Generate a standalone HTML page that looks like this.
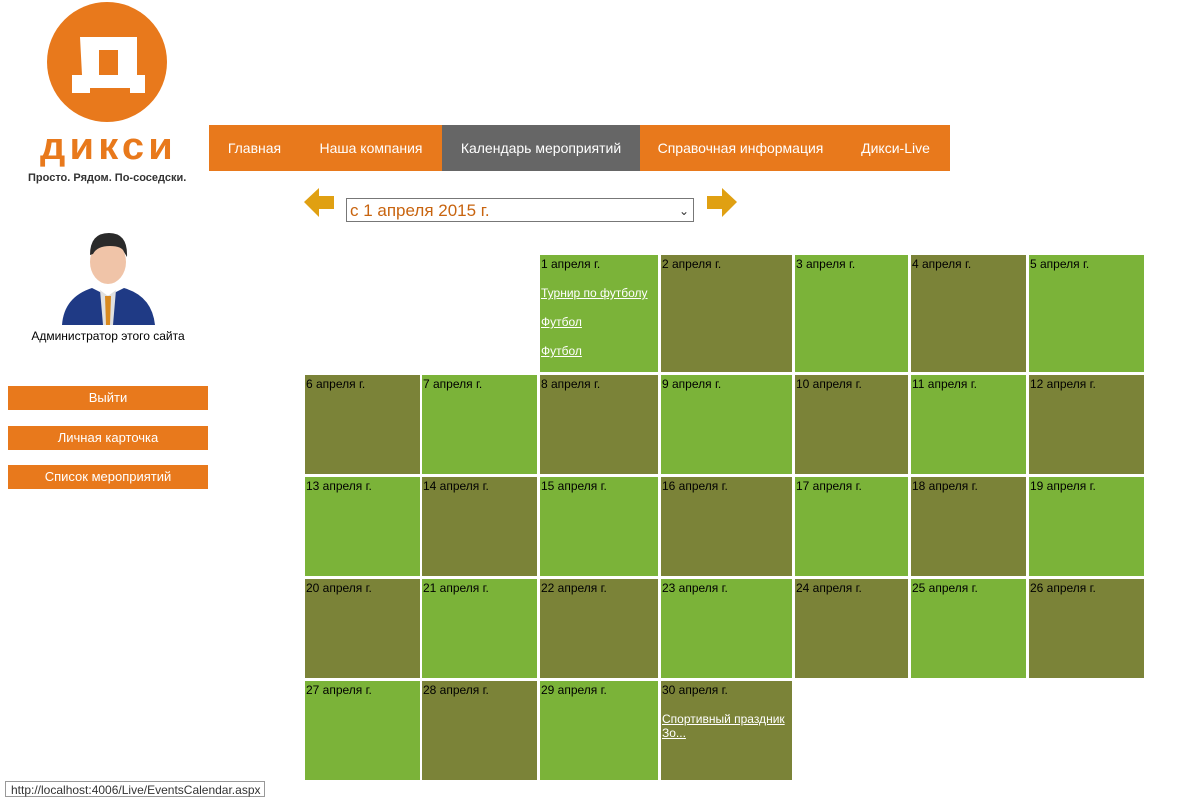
<!DOCTYPE html><html><head><meta charset="utf-8"><style>
body{margin:0;width:1189px;height:794px;position:relative;background:#fff;font-family:"Liberation Sans","DejaVu Sans",sans-serif;overflow:hidden}
.a{position:absolute}
.nav{left:209px;top:125px;height:46px;background:#e8791c;width:741px;display:flex}
.nav div{color:#fff;font-size:14px;line-height:46px;text-align:center}
.btn{position:absolute;left:8px;width:200px;height:24px;background:#e8791c;color:#fff;font-size:13px;line-height:24px;text-align:center}
.c{position:absolute;font-size:12px;color:#000;padding:2px 0 0 1px;box-sizing:border-box;line-height:14px}
.g{background:#7bb339}.o{background:#7b8338}
.c a{color:#fff;text-decoration:underline;display:block;margin-top:15px}
</style></head><body>
<svg class="a" style="left:40px;top:2px" width="135" height="125" viewBox="0 0 135 125">
<circle cx="67" cy="60" r="60" fill="#e8791c"/>
<path fill-rule="evenodd" d="M40 35H97V73H105V91H90V86H50V91H32V73H42Z M59 48H78V73H59Z" fill="#fff"/>
</svg>
<div class="a" style="left:40px;top:127px;font-size:38px;font-weight:900;color:#e8791c;letter-spacing:4px;line-height:40px;transform:scaleX(1.05);transform-origin:left">дикси</div>
<div class="a" style="left:28px;top:172px;font-size:11px;font-weight:bold;color:#333">Просто. Рядом. По-соседски.</div>
<div class="a nav"><div style="width:91px">Главная</div><div style="width:142px">Наша компания</div><div style="width:198px;background:#666">Календарь мероприятий</div><div style="width:201px">Справочная информация</div><div style="width:109px">Дикси-Live</div></div>
<svg class="a" style="left:302px;top:186px" width="34" height="32"><path d="M2 16L17 2v8h15v13H17v8z" fill="#e0a012"/></svg>
<svg class="a" style="left:705px;top:186px" width="34" height="32"><path d="M32 16L17 2v8H2v13h15v8z" fill="#e0a012"/></svg>
<div class="a" style="left:346px;top:198px;width:348px;height:24px;border:1px solid #777;box-sizing:border-box;font-size:17px;color:#c8640f;line-height:24px;padding-left:3px">с 1 апреля 2015 г.<span style="position:absolute;right:4px;top:0;color:#333;font-size:12px">&#8964;</span></div>
<svg class="a" style="left:60px;top:230px" width="96" height="95"><ellipse cx="48" cy="32" rx="18" ry="22" fill="#f0c4a8"/><path d="M30 25q0-22 19-22 19 0 18 24l-3-5q-2-6-14-6-13 0-17 8z" fill="#2a2a2a"/><path d="M2 95q2-28 30-37l16 8 16-8q28 8 31 37z" fill="#1f3a85"/><path d="M40 60l8 6 8-6 -3 35h-10z" fill="#e0e0e0"/><path d="M45 66h6l-1 29h-4z" fill="#d98a20"/></svg>
<div class="a" style="left:0;width:216px;top:329px;text-align:center;font-size:12px">Администратор этого сайта</div>
<div class="btn" style="top:386px">Выйти</div>
<div class="btn" style="top:426px">Личная карточка</div>
<div class="btn" style="top:465px">Список мероприятий</div>
<div id="cal"></div>
<script>
var xs=[[305,420],[422,537],[540,658],[661,792],[795,908],[911,1026],[1029,1144]];
var ys=[[255,372],[375,474],[477,576],[579,678],[681,780]];
var ev={1:['Турнир по футболу','Футбол','Футбол'],30:['Спортивный праздник Зо...']};
var h='';
for(var d=1;d<=30;d++){var i=d+1,r=Math.floor(i/7),c=i%7;var x=xs[c],y=ys[r];
var e='';(ev[d]||[]).forEach(function(t){e+='<a>'+t+'</a>'});
h+='<div class="c '+(d%2?'g':'o')+'" style="left:'+x[0]+'px;top:'+y[0]+'px;width:'+(x[1]-x[0])+'px;height:'+(y[1]-y[0])+'px">'+d+' апреля г.'+e+'</div>';}
document.getElementById('cal').innerHTML=h;
</script>
<div class="a" style="left:5px;top:781px;width:260px;height:16px;border:1px solid #999;background:#fff;font-size:12px;color:#333;padding-left:5px;box-sizing:border-box;line-height:16px">http://localhost:4006/Live/EventsCalendar.aspx</div>
</body></html>
